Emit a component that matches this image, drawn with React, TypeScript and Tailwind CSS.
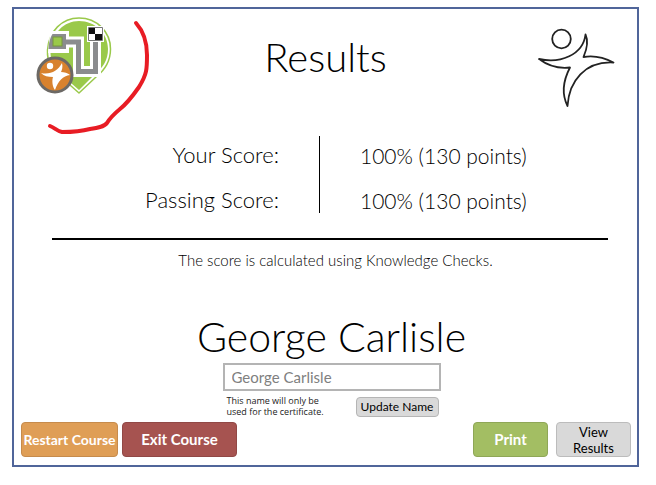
function CourseBadge() {
  return (
    <svg viewBox="0 0 78 80" className="h-20 w-[78px]" aria-hidden="true">
      <path
        d="M43 76 L26 61 C15 54 11 44 11.500 33 C13 14 26 1 43 1 C61 1 74.500 15 74.500 32 C74.500 44 69 53 60 60 Z"
        fill="#fff"
        stroke="#9ac94a"
        strokeWidth="1.500"
        strokeLinejoin="round"
      />
      <path
        d="M43 73 L28 60 C18 53 14 44 14.500 33 C16 16 28 4 43 4 C59 4 72 16 72 32 C72 43 67 51 58 58 Z"
        fill="#9ac94a"
      />
      <path d="M30 25 H42.500 V54.500 H59.500 V20" fill="none" stroke="#fff" strokeWidth="11" />
      <path d="M14 14 H33 V36 H12 Z" fill="#fff" />
      <path d="M30 25 H42.500 V54.500 H59.500 V23" fill="none" stroke="#8b8c8e" strokeWidth="5" />
      <path d="M16.500 17 H30 V32 H12.500 C13 25 14 21 16.500 17 Z" fill="#8b8c8e" />
      <rect x="17" y="20" width="9" height="9" fill="#9ac94a" stroke="#77963f" strokeWidth="1" />
      <rect x="51" y="9" width="17" height="16" fill="#fff" />
      <path d="M53 11 H59 V17 H53 Z M59 17 H66 V23 H59 Z" fill="#111" />
      <path d="M52.500 10.500 H66.500 V23.500 H52.500 Z" fill="none" stroke="#777" strokeWidth="1" />
      <circle cx="19" cy="58" r="17" fill="#d8822e" stroke="#6c6965" strokeWidth="3" />
      <circle cx="14" cy="49" r="3.200" fill="#fff" />
      <path
        d="M5 56 C14 58 22 54 26 46 C27 50 26 53 25 55 C28 55 32 56 34 58 C27 59 22 64 19 73 C16 69 16 63 17 60 C12 60 8 59 5 56 Z"
        fill="#fff"
      />
    </svg>
  )
}

function FigureOutline() {
  return (
    <svg
      viewBox="0 0 78 80"
      className="h-20 w-[78px]"
      fill="none"
      stroke="#222"
      strokeWidth="1.800"
      strokeLinejoin="round"
      aria-hidden="true"
    >
      <circle cx="24.500" cy="12" r="9.300" />
      <path d="M2 32 C23 37 46 28 48.500 7.500 C51.500 14 50 22 46.500 30 C58 28 68 31 76.500 35.500 C48 34 32 54 30.500 79 C24 66 27 52 33 40.500 C20 42 10 38 2 32 Z" />
    </svg>
  )
}

function RedMark() {
  return (
    <svg viewBox="0 0 110 120" className="absolute left-[30px] top-2 h-[120px] w-[110px]" fill="none" aria-hidden="true">
      <path
        d="M92 6 C101 16 103 27 103 38 C103 52 103 57 95 70 C88 80 81 88 76 92 C70 97 66 101 63 106 C60 110 53 111 46 112 C35 115 25 115 18 115 C13 114 11 111 6 109"
        stroke="#e81c24"
        strokeWidth="4"
        strokeLinecap="round"
      />
    </svg>
  )
}

export default function App() {
  return (
    <div className="min-h-screen bg-white pl-3 pr-[17px] pt-[7px] font-['Lato',sans-serif] text-black">
      <main className="relative border-2 border-[#50659a] px-1.5 pb-2">
        <RedMark />

        <header className="flex items-start justify-between px-4 pt-2">
          <CourseBadge />
          <h1 className="pt-3 text-[40px] font-light leading-[56px]">Results</h1>
          <div className="pt-2.5">
            <FigureOutline />
          </div>
        </header>

        {/* Scores */}
        <dl className="ml-8 mr-[23px] grid grid-cols-2 border-b-2 border-black pb-[25px] pt-[29px]">
          <div className="mr-2.5 flex h-[77px] flex-col justify-between border-r border-black pr-10 pt-1.5 text-right text-[22px] font-light leading-[26px]">
            <dt>Your Score:</dt>
            <dt>Passing Score:</dt>
          </div>
          <div className="flex h-[77px] flex-col justify-between pl-[30px] pt-2 text-[21px] font-light leading-6">
            <dd>100% (130 points)</dd>
            <dd>100% (130 points)</dd>
          </div>
        </dl>

        <p className="pl-5 pt-2.5 text-center text-[15px] font-light leading-5">
          The score is calculated using Knowledge Checks.
        </p>

        {/* Learner name */}
        <section className="pl-3 pt-10">
          <h2 className="text-center text-[41px] font-light leading-[53px]">George Carlisle</h2>
          <div className="mx-auto w-[218px]">
            <input
              aria-label="Name on certificate"
              placeholder="George Carlisle"
              className="h-7 w-full border-2 border-[#b4b4b4] px-[7px] text-[15px] placeholder:text-[#808080]"
            />
            <div className="flex items-start justify-between pl-1 pr-0.5 pt-1">
              <p className="w-[104px] font-['Open_Sans',sans-serif] text-[9px] leading-[11px] text-[#222]">
                This name will only be used for the certificate.
              </p>
              <button className="mt-0.5 h-5 w-[83px] rounded border border-[#b5b5b5] bg-[#d9d9d9] text-xs">
                Update Name
              </button>
            </div>
          </div>
        </section>

        <footer className="flex justify-between pl-px pt-[5px]">
          <div className="flex gap-1">
            <button className="h-[35px] w-[97px] whitespace-nowrap rounded border border-[#c68b4c] bg-[#df9e56] text-sm font-bold text-white">
              Restart Course
            </button>
            <button className="h-[35px] w-[115px] rounded border border-[#914846] bg-[#a65350] text-[15px] font-bold text-white">
              Exit Course
            </button>
          </div>
          <div className="flex gap-2">
            <button className="h-[35px] w-[75px] rounded border border-[#8fa757] bg-[#a3be63] text-[15px] font-bold text-white">
              Print
            </button>
            <button className="h-[35px] w-[75px] rounded border border-[#bcbcbc] bg-[#d9d9d9] px-3 text-[13px] leading-4">
              View Results
            </button>
          </div>
        </footer>
      </main>
    </div>
  )
}
